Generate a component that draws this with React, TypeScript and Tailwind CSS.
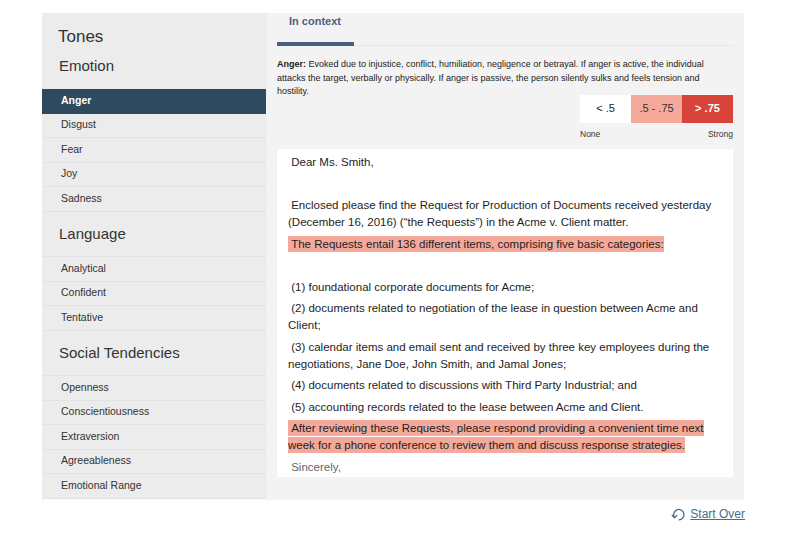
import { ReactNode } from "react";

const emotion = ["Anger", "Disgust", "Fear", "Joy", "Sadness"];
const language = ["Analytical", "Confident", "Tentative"];
const social = ["Openness", "Conscientiousness", "Extraversion", "Agreeableness", "Emotional Range"];

function NavItem({ label, active }: { label: string; active?: boolean }) {
  return (
    <div
      className={
        active
          ? "h-[24.5px] flex items-center pl-[19px] bg-[#2d4a5e] text-white font-bold text-[10.5px]"
          : "h-[24.5px] flex items-center pl-[19px] border-b border-[#e2e2e2] text-[#333] text-[10.5px]"
      }
    >
      {label}
    </div>
  );
}

function Group({ title, items }: { title: string; items: string[] }) {
  return (
    <>
      <div className="h-[45.5px] flex items-center pl-[17px] text-[15px] text-[#333] border-b border-[#e2e2e2]">
        {title}
      </div>
      {items.map((i) => (
        <NavItem key={i} label={i} />
      ))}
    </>
  );
}

function Para({ children, hl }: { children: ReactNode; hl?: boolean }) {
  return (
    <p className="mb-[4.5px]">
      {hl ? (
        <span className="bg-[#f4a99b] py-[2px] [box-decoration-break:clone]">{children}</span>
      ) : (
        children
      )}
    </p>
  );
}

export default function App() {
  return (
    <div className="min-h-[538px] bg-white font-['Liberation_Sans',Arial,sans-serif] pt-[13px] pl-[42px]">
      <div className="flex">
        {/* Sidebar */}
        <div className="w-[224px] h-[486px] bg-[#ececec]">
          <div className="pt-[14px] pl-[16px] text-[17px] leading-[20px] text-[#333]">Tones</div>
          <div className="mt-[9px] mb-[13px] pl-[17px] text-[15px] leading-[20px] text-[#333]">Emotion</div>
          <NavItem label="Anger" active />
          {emotion.slice(1).map((e) => (
            <NavItem key={e} label={e} />
          ))}
          <Group title="Language" items={language} />
          <Group title="Social Tendencies" items={social} />
        </div>

        {/* Main panel */}
        <div className="w-[478px] h-[487px] bg-[#f3f3f3] px-[11px]">
          <div className="border-b border-[#e6e6e6] h-[33px] relative">
            <div className="pl-[12px] text-[11px] font-bold text-[#4b5f7c]">In context</div>
            <div className="absolute left-0 bottom-[-1px] w-[77px] h-[4px] bg-[#4b5f82]"></div>
          </div>

          <p className="mt-[12px] text-[9px] leading-[13.5px] text-[#222]">
            <b>Anger:</b> Evoked due to injustice, conflict, humiliation, negligence or betrayal. If anger is active,
            the individual attacks the target, verbally or physically. If anger is passive, the person silently sulks
            and feels tension and hostility.
          </p>

          <div className="flex flex-col items-end -mt-[4px]">
            <div className="flex text-[11px] h-[28px]">
              <div className="w-[51px] bg-white flex items-center justify-center text-[#222]">&lt; .5</div>
              <div className="w-[51px] bg-[#f4a99b] flex items-center justify-center text-[#333]">.5 - .75</div>
              <div className="w-[51px] bg-[#d9443a] flex items-center justify-center text-white font-semibold">
                &gt; .75
              </div>
            </div>
            <div className="w-[153px] flex justify-between text-[8.5px] text-[#333] mt-[5px]">
              <span>None</span>
              <span>Strong</span>
            </div>
          </div>

          <div className="mt-[9px] h-[328px] bg-white px-[11px] pt-[5px] text-[11.5px] leading-[17px] text-[#1e1e1e]">
            <Para>&nbsp;Dear Ms. Smith,</Para>
            <Para>&nbsp;</Para>
            <Para>
              &nbsp;Enclosed please find the Request for Production of Documents received yesterday (December 16,
              2016) (“the Requests”) in the Acme v. Client matter.
            </Para>
            <Para hl>&nbsp;The Requests entail 136 different items, comprising five basic categories:</Para>
            <Para>&nbsp;</Para>
            <Para>&nbsp;(1) foundational corporate documents for Acme;</Para>
            <Para>&nbsp;(2) documents related to negotiation of the lease in question between Acme and Client;</Para>
            <Para>
              &nbsp;(3) calendar items and email sent and received by three key employees during the negotiations,
              Jane Doe, John Smith, and Jamal Jones;
            </Para>
            <Para>&nbsp;(4) documents related to discussions with Third Party Industrial; and</Para>
            <Para>&nbsp;(5) accounting records related to the lease between Acme and Client.</Para>
            <Para hl>
              &nbsp;After reviewing these Requests, please respond providing a convenient time next week for a phone
              conference to review them and discuss response strategies.
            </Para>
            <p className="text-[#666]">&nbsp;Sincerely,</p>
          </div>
        </div>
      </div>

      <div className="w-[703px] flex justify-end mt-[5px]">
        <a href="#" className="flex items-center gap-[4px] text-[12px] text-[#4a6d8e] underline">
          <svg width="15" height="14" viewBox="0 0 15 14" fill="none" stroke="#4a6d8e" strokeWidth="1.3" strokeLinecap="round" strokeLinejoin="round">
            <path d="M3.5 10.5 A5.2 5.2 0 1 1 8 12.8" />
            <path d="M1.2 8.3 L3.5 10.8 L5.9 8.4" />
          </svg>
          Start Over
        </a>
      </div>
    </div>
  );
}
